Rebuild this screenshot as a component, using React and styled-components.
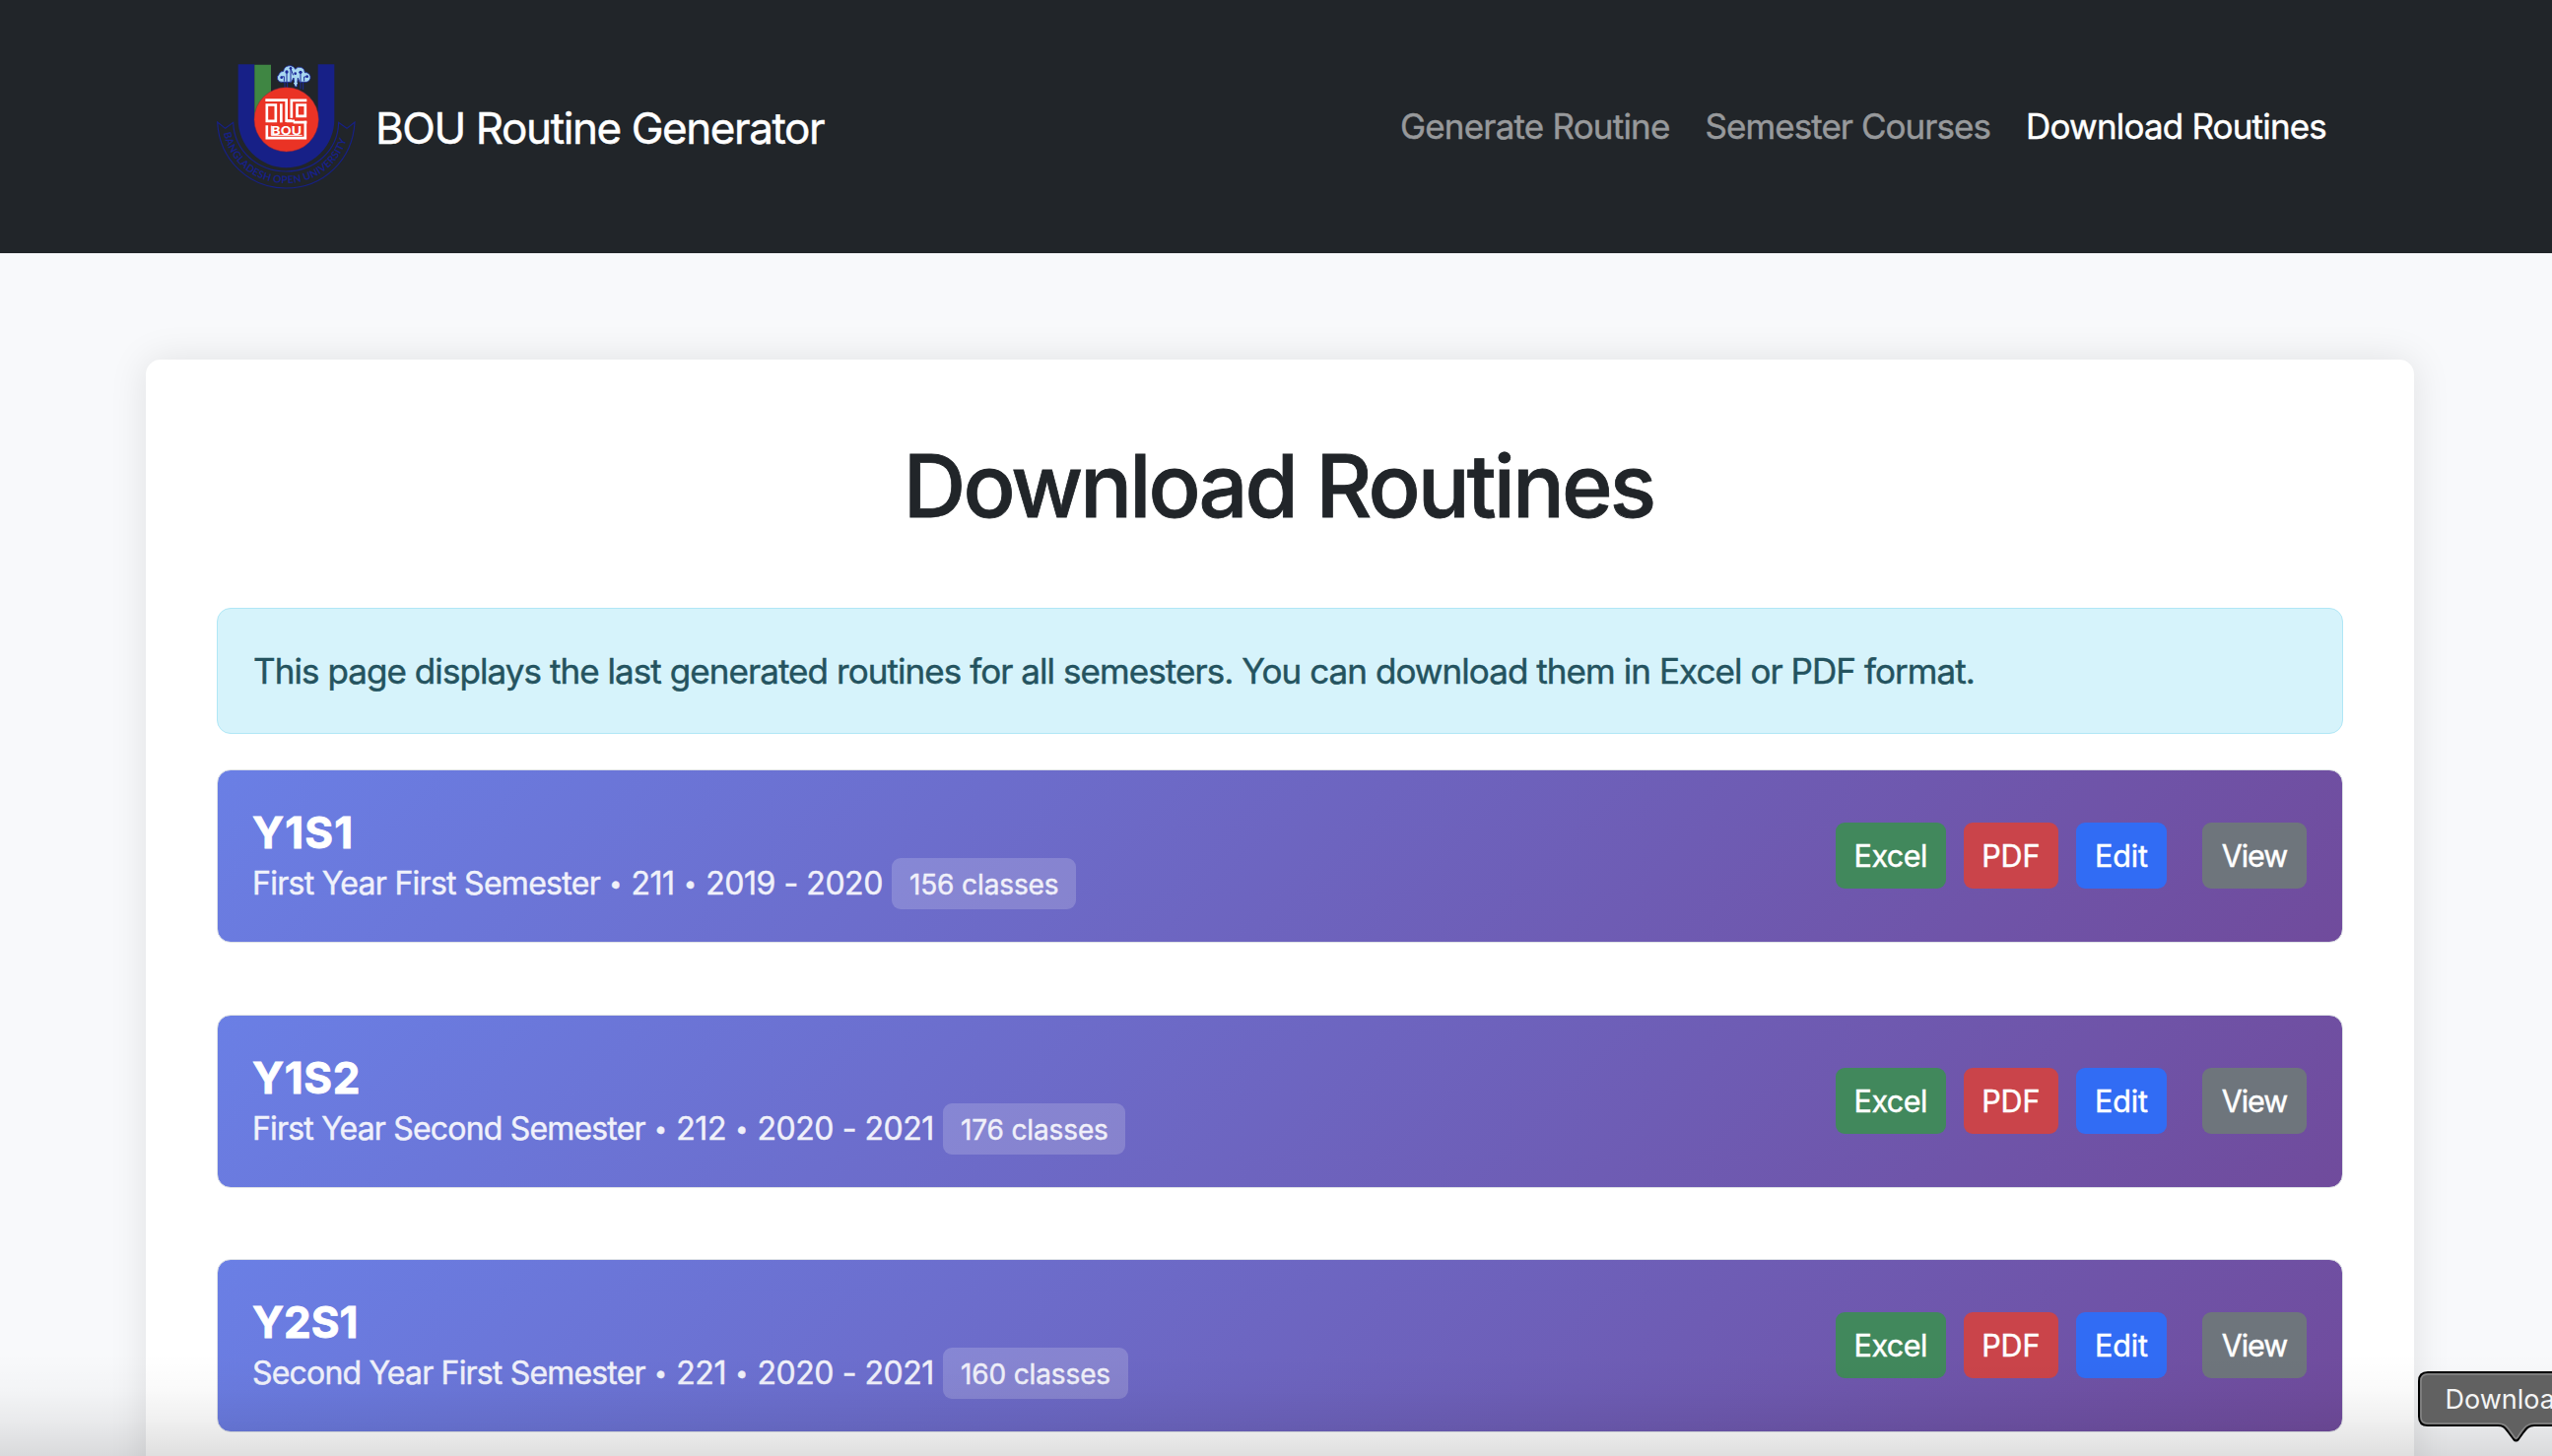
import React from 'react';
import styled, { createGlobalStyle } from 'styled-components';

const GlobalStyle = createGlobalStyle`
  *, *::before, *::after { box-sizing: border-box; }
  body {
    margin: 0;
    background: #f8f9fb;
    color: #212529;
    font-family: Inter, 'Liberation Sans', sans-serif;
    font-size: 35px;
    font-weight: 400;
    line-height: 54px;
    -webkit-text-stroke: 0.45px currentColor;
    overflow: hidden;
  }
`;

const Page = styled.div`
  position: relative;
  height: 1478px;
  overflow: hidden;
`;

const Navbar = styled.nav`
  display: flex;
  align-items: center;
  justify-content: space-between;
  height: 257px;
  padding: 0 229px 0 220px;
  background: #212529;
`;

const Brand = styled.a`
  display: flex;
  align-items: center;
  gap: 20px;
  color: #fff;
  font-size: 44px;
  letter-spacing: -1.42px;
  white-space: nowrap;
`;

const BrandName = styled.span`
  padding-top: 3px;
`;

const NavLinks = styled.div`
  display: flex;
  gap: 36px;
  padding-bottom: 2px;
`;

const NavLink = styled.a`
  color: ${(p) => (p.$active ? '#fff' : '#97999b')};
  letter-spacing: ${(p) => p.$track}px;
  white-space: nowrap;
`;

const Card = styled.main`
  width: 2302px;
  height: 1500px;
  margin: 108px 0 0 148px;
  padding: 72px;
  border-radius: 15px;
  background: #fff;
  box-shadow: 0 0 38px rgba(0, 0, 0, 0.1);
`;

const Title = styled.h1`
  margin: 0 0 70px;
  padding: 2px 3px 0 0;
  font-size: 88px;
  font-weight: 500;
  line-height: 108px;
  letter-spacing: -2.93px;
  text-align: center;
  -webkit-text-stroke-width: 0.8px;
`;

const Alert = styled.div`
  height: 128px;
  padding: 36px;
  margin-bottom: 36px;
  border: 1px solid #b0e7f6;
  border-radius: 14px;
  background: #d6f3fb;
  color: #24535f;
  letter-spacing: -0.935px;
  white-space: nowrap;
`;

const RoutineList = styled.div`
  display: flex;
  flex-direction: column;
  gap: 72.5px;
`;

const Routine = styled.section`
  display: flex;
  align-items: center;
  justify-content: space-between;
  height: 176px;
  padding: 0 36px 0 35px;
  border: 1px solid #dee2e6;
  border-radius: 14px;
  background: linear-gradient(135deg, #6a7fe5 0%, #704b9c 100%);
  background-origin: border-box;
  color: #fff;
`;

const Info = styled.div`
  padding-top: 2px;
`;

const Code = styled.h5`
  margin: 0;
  padding-top: 2px;
  font-size: 44px;
  font-weight: 700;
  line-height: 52px;
  letter-spacing: ${(p) => p.$track}px;
  -webkit-text-stroke-width: 0.8px;
`;

const Summary = styled.div`
  display: flex;
  align-items: center;
  height: 52px;
  font-size: 32px;
  opacity: 0.9;
  white-space: nowrap;
`;

const Part = styled.span`
  letter-spacing: ${(p) => p.$track}px;
`;

const Dot = styled.span`
  width: 31.5px;
  font-size: 23px;
  text-align: center;
`;

const Badge = styled.span`
  height: 52px;
  margin-left: 9px;
  padding: 0 17.6px 0 18px;
  border-radius: 9px;
  background: rgba(255, 255, 255, 0.2);
  font-size: 28px;
  line-height: 55px;
  letter-spacing: -0.12px;
`;

const Actions = styled.div`
  display: flex;
  gap: 18.5px;
  padding-bottom: 1px;
`;

const Button = styled.button`
  width: ${(p) => p.$width}px;
  height: 67px;
  margin: 0 0 0 ${(p) => (p.$apart ? 17.5 : 0)}px;
  padding: 0;
  border: 0;
  border-radius: 9px;
  background: ${(p) => p.$color};
  color: #fff;
  font: 400 30.5px Inter, 'Liberation Sans', sans-serif;
  letter-spacing: ${(p) => p.$track}px;
`;

const BottomShade = styled.div`
  position: absolute;
  inset: auto 0 0 0;
  height: 104px;
  background: linear-gradient(
    to bottom,
    rgba(0, 0, 0, 0) 0%,
    rgba(0, 0, 0, 0.02) 35%,
    rgba(0, 0, 0, 0.06) 65%,
    rgba(0, 0, 0, 0.125) 100%
  );
`;

const Tooltip = styled.div`
  position: absolute;
  left: 2454px;
  top: 1392px;
  width: 200px;
  height: 74px;
  -webkit-text-stroke-width: 0;
`;

const TooltipShape = styled.svg`
  position: absolute;
  inset: 0;
`;

const TooltipText = styled.span`
  position: relative;
  display: block;
  padding-left: 27.5px;
  color: #f4f4f4;
  font-size: 27px;
  font-weight: 400;
  line-height: 57px;
`;

const LogoMark = styled.svg`
  -webkit-text-stroke-width: 0;
`;

const TIP =
  'M10 1 H199 V55 H118 C112 55 110 58 107 62 L102 69 Q99.5 72 97 69 L91 61 C88 57 87 55 81 55 H10 Q1 55 1 46 V10 Q1 1 10 1 Z';
const TIP_INNER =
  'M10 3 H199 V53 H118 C111 53 108 57 105 61 L101 67 Q99.5 69 98 67 L93 60 C90 56 88 53 81 53 H10 Q3 53 3 46 V10 Q3 3 10 3 Z';

function Logo() {
  return (
    <LogoMark width="141" height="127" viewBox="59 74 423 381">
      <path
        d="M124 75 H174 V243 A96.5 96.5 0 0 0 367 243 V75 H417 V243 A146.5 146.5 0 0 1 124 243 Z"
        fill="#172087"
      />
      <path d="M174 76 H224 V243 H174 Z" fill="#3f8643" />
      <g stroke="#1c2a9a" strokeWidth="3" fill="none">
        <path d="M266 120 V150 M274 120 V150 M314 112 V150 M322 112 V152" />
      </g>
      <path
        d="M258 129 A13 13 0 0 1 248 106 A14 14 0 0 1 262 96 A19 19 0 0 1 298 90 A16 16 0 0 1 327 100 A14 14 0 1 1 332 129 H311 L306 116 L303 143 H297 L293 116 L286 129 Z"
        fill="#a9d8f0"
        stroke="#1c2a9a"
        strokeWidth="2.5"
      />
      <g fill="none" stroke="#1c2a9a" strokeWidth="3">
        <path d="M272 128 V99 M284 128 V88 L292 108 M314 128 V100 M325 126 V113 L336 112 M264 127 V112 L254 114" />
      </g>
      <g fill="#1c2a9a">
        <circle cx="272" cy="98" r="5" />
        <circle cx="284" cy="87" r="4" />
        <circle cx="314" cy="99" r="5" />
        <circle cx="334" cy="112" r="4" />
        <circle cx="256" cy="115" r="4" />
        <circle cx="298" cy="103" r="4" />
      </g>
      <path d="M299 108 V136 M294 131 L299 138 L304 131" fill="none" stroke="#a9d8f0" strokeWidth="3.5" />
      <circle cx="271" cy="243" r="98" fill="#ea3325" stroke="#8c2440" strokeWidth="1.5" />
      <g fill="none" stroke="#fff" strokeWidth="8">
        <path d="M207 184 H271 V247 H287" />
        <path d="M211.500 247.500 V198.500 H238.500 V247.500 Z" />
        <path d="M255 195 V252" />
        <path d="M333 184.500 H286.500 V238" />
        <path d="M303.500 199 H328.500 V232.500 H303.500 Z" />
        <path d="M333 251.500 H292 M271 247.500 H296" />
        <path d="M328.500 247 V299.500 H211.500 V261" />
        <path d="M225 262 V291 H319" strokeWidth="3" />
      </g>
      <text
        x="225"
        y="289"
        fill="#fff"
        fontFamily="Inter, sans-serif"
        fontSize="36"
        fontWeight="700"
        letterSpacing="0"
        textLength="92"
        lengthAdjust="spacingAndGlyphs"
      >
        BOU
      </text>
      <g fill="none" stroke="#172087" strokeWidth="3.5">
        <path d="M61 251 L85 270 L109 252 C112 339 184 401 270 401 C356 401 428 339 430 252 L455 270 L479 251 C473 366 383 452 270 452 C157 452 67 366 61 251 Z" />
      </g>
      <path id="ribbon-line" d="M80 284 C99 373 173 437 270 437 C367 437 441 373 460 284" fill="none" />
      <text
        fill="#172087"
        fontFamily="Lato, 'Open Sans', sans-serif"
        fontSize="31"
        fontWeight="700"
        letterSpacing="0"
      >
        <textPath href="#ribbon-line" textLength="508" lengthAdjust="spacing">
          BANGLADESH OPEN UNIVERSITY
        </textPath>
      </text>
    </LogoMark>
  );
}

const LINKS = [
  { label: 'Generate Routine', track: -0.8 },
  { label: 'Semester Courses', track: -0.95 },
  { label: 'Download Routines', track: -0.82, active: true },
];

const ROUTINES = [
  { code: 'Y1S1', codeTrack: 1.1, track: -0.72, parts: ['First Year First Semester', '211', '2019 - 2020'], classes: 156 },
  { code: 'Y1S2', codeTrack: 0.6, track: -0.82, parts: ['First Year Second Semester', '212', '2020 - 2021'], classes: 176 },
  { code: 'Y2S1', codeTrack: -0.1, track: -0.82, parts: ['Second Year First Semester', '221', '2020 - 2021'], classes: 160 },
];

const ACTIONS = [
  { label: 'Excel', color: '#41885c', width: 111.5, track: -0.5 },
  { label: 'PDF', color: '#ca444a', width: 95.5, track: -0.2 },
  { label: 'Edit', color: '#316cf4', width: 92, track: -0.1 },
  { label: 'View', color: '#6e757c', width: 106, track: -1, apart: true },
];

export default function App() {
  return (
    <Page>
      <GlobalStyle />
      <Navbar>
        <Brand>
          <Logo />
          <BrandName>BOU Routine Generator</BrandName>
        </Brand>
        <NavLinks>
          {LINKS.map((l) => (
            <NavLink key={l.label} $active={l.active} $track={l.track}>
              {l.label}
            </NavLink>
          ))}
        </NavLinks>
      </Navbar>
      <Card>
        <Title>Download Routines</Title>
        <Alert>
          This page displays the last generated routines for all semesters. You can download them in Excel or PDF
          format.
        </Alert>
        <RoutineList>
          {ROUTINES.map((r) => (
            <Routine key={r.code}>
              <Info>
                <Code $track={r.codeTrack}>{r.code}</Code>
                <Summary>
                  {r.parts.map((part, i) => (
                    <React.Fragment key={part}>
                      {i > 0 && <Dot>•</Dot>}
                      <Part $track={i > 0 ? -0.45 : r.track}>{part}</Part>
                    </React.Fragment>
                  ))}
                  <Badge>{r.classes} classes</Badge>
                </Summary>
              </Info>
              <Actions>
                {ACTIONS.map((a) => (
                  <Button key={a.label} $color={a.color} $width={a.width} $track={a.track} $apart={a.apart}>
                    {a.label}
                  </Button>
                ))}
              </Actions>
            </Routine>
          ))}
        </RoutineList>
      </Card>
      <BottomShade />
      <Tooltip>
        <TooltipShape width="200" height="74" viewBox="0 0 200 74">
          <path d={TIP} fill="#616161" stroke="#000" strokeWidth="2" />
          <path d={TIP_INNER} fill="none" stroke="#858585" strokeWidth="1.5" />
        </TooltipShape>
        <TooltipText>Downloads</TooltipText>
      </Tooltip>
    </Page>
  );
}
